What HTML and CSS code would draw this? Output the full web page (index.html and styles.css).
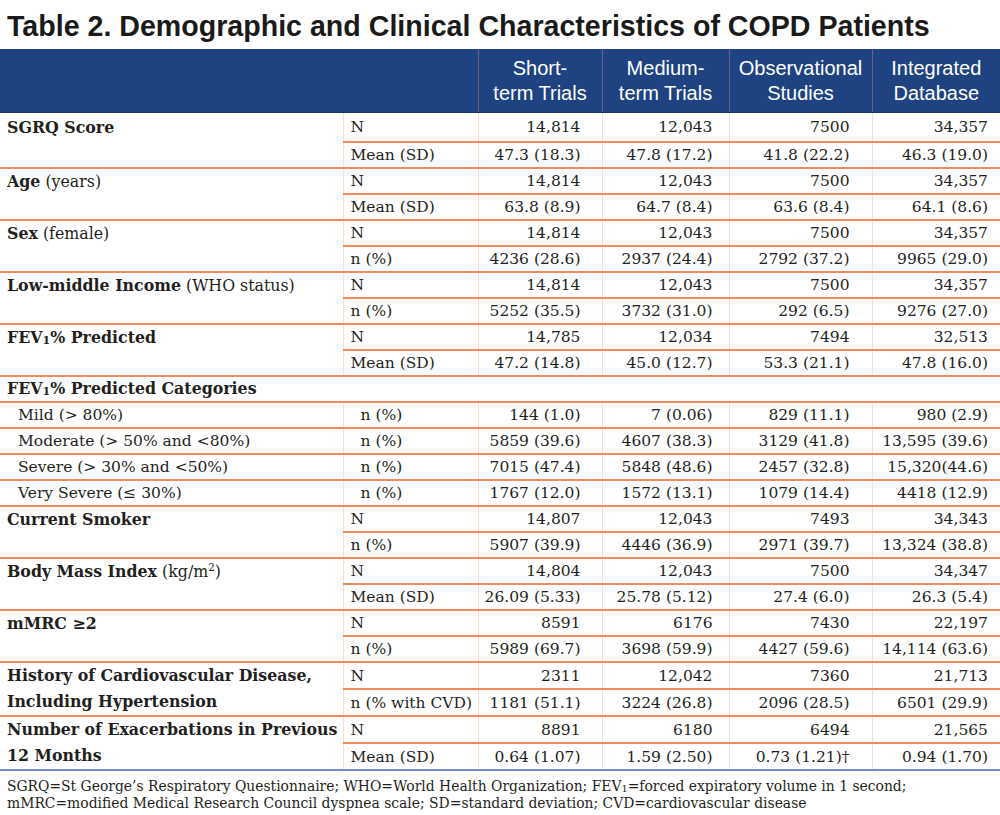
FILE: index.html
```html
<!DOCTYPE html>
<html lang="en">
<head>
<meta charset="utf-8">
<title>Table 2</title>
<link rel="stylesheet" href="styles.css">
</head>
<body>
<h1 class="title">Table 2. Demographic and Clinical Characteristics of COPD Patients</h1>
<table class="t">
  <colgroup>
    <col class="c-lab"><col class="c-st"><col class="c-1"><col class="c-2"><col class="c-3"><col class="c-4">
  </colgroup>
  <thead>
    <tr>
      <th colspan="2" class="h-blank"></th>
      <th>Short-<br>term Trials</th>
      <th>Medium-<br>term Trials</th>
      <th>Observational<br>Studies</th>
      <th>Integrated<br>Database</th>
    </tr>
  </thead>
  <tbody>
    <tr class="r-first">
      <td class="lab lab-first" rowspan="2"><b>SGRQ Score</b></td>
      <td class="st sub">N</td><td class="v v1 sub">14,814</td><td class="v v2 sub">12,043</td><td class="v v3 sub">7500</td><td class="v v4 sub">34,357</td>
    </tr>
    <tr>
      <td class="st">Mean (SD)</td><td class="v v1">47.3 (18.3)</td><td class="v v2">47.8 (17.2)</td><td class="v v3">41.8 (22.2)</td><td class="v v4">46.3 (19.0)</td>
    </tr>
    <tr>
      <td class="lab" rowspan="2"><b>Age</b> (years)</td>
      <td class="st sub">N</td><td class="v v1 sub">14,814</td><td class="v v2 sub">12,043</td><td class="v v3 sub">7500</td><td class="v v4 sub">34,357</td>
    </tr>
    <tr>
      <td class="st">Mean (SD)</td><td class="v v1">63.8 (8.9)</td><td class="v v2">64.7 (8.4)</td><td class="v v3">63.6 (8.4)</td><td class="v v4">64.1 (8.6)</td>
    </tr>
    <tr>
      <td class="lab" rowspan="2"><b>Sex</b> (female)</td>
      <td class="st sub">N</td><td class="v v1 sub">14,814</td><td class="v v2 sub">12,043</td><td class="v v3 sub">7500</td><td class="v v4 sub">34,357</td>
    </tr>
    <tr>
      <td class="st">n (%)</td><td class="v v1">4236 (28.6)</td><td class="v v2">2937 (24.4)</td><td class="v v3">2792 (37.2)</td><td class="v v4">9965 (29.0)</td>
    </tr>
    <tr>
      <td class="lab" rowspan="2"><b>Low-middle Income</b> (WHO status)</td>
      <td class="st sub">N</td><td class="v v1 sub">14,814</td><td class="v v2 sub">12,043</td><td class="v v3 sub">7500</td><td class="v v4 sub">34,357</td>
    </tr>
    <tr>
      <td class="st">n (%)</td><td class="v v1">5252 (35.5)</td><td class="v v2">3732 (31.0)</td><td class="v v3">292 (6.5)</td><td class="v v4">9276 (27.0)</td>
    </tr>
    <tr>
      <td class="lab" rowspan="2"><b>FEV<sub class="s1">1</sub>% Predicted</b></td>
      <td class="st sub">N</td><td class="v v1 sub">14,785</td><td class="v v2 sub">12,034</td><td class="v v3 sub">7494</td><td class="v v4 sub">32,513</td>
    </tr>
    <tr>
      <td class="st">Mean (SD)</td><td class="v v1">47.2 (14.8)</td><td class="v v2">45.0 (12.7)</td><td class="v v3">53.3 (21.1)</td><td class="v v4">47.8 (16.0)</td>
    </tr>
    <tr>
      <td class="lab head-row" colspan="6"><b>FEV<sub class="s1">1</sub>% Predicted Categories</b></td>
    </tr>
    <tr>
      <td class="lab cat">Mild (&gt; 80%)</td>
      <td class="st cat-st">n (%)</td><td class="v v1">144 (1.0)</td><td class="v v2">7 (0.06)</td><td class="v v3">829 (11.1)</td><td class="v v4">980 (2.9)</td>
    </tr>
    <tr>
      <td class="lab cat">Moderate (&gt; 50% and &lt;80%)</td>
      <td class="st cat-st">n (%)</td><td class="v v1">5859 (39.6)</td><td class="v v2">4607 (38.3)</td><td class="v v3">3129 (41.8)</td><td class="v v4">13,595 (39.6)</td>
    </tr>
    <tr>
      <td class="lab cat">Severe (&gt; 30% and &lt;50%)</td>
      <td class="st cat-st">n (%)</td><td class="v v1">7015 (47.4)</td><td class="v v2">5848 (48.6)</td><td class="v v3">2457 (32.8)</td><td class="v v4">15,320(44.6)</td>
    </tr>
    <tr>
      <td class="lab cat">Very Severe (≤ 30%)</td>
      <td class="st cat-st">n (%)</td><td class="v v1">1767 (12.0)</td><td class="v v2">1572 (13.1)</td><td class="v v3">1079 (14.4)</td><td class="v v4">4418 (12.9)</td>
    </tr>
    <tr>
      <td class="lab" rowspan="2"><b>Current Smoker</b></td>
      <td class="st sub">N</td><td class="v v1 sub">14,807</td><td class="v v2 sub">12,043</td><td class="v v3 sub">7493</td><td class="v v4 sub">34,343</td>
    </tr>
    <tr>
      <td class="st">n (%)</td><td class="v v1">5907 (39.9)</td><td class="v v2">4446 (36.9)</td><td class="v v3">2971 (39.7)</td><td class="v v4">13,324 (38.8)</td>
    </tr>
    <tr>
      <td class="lab" rowspan="2"><b>Body Mass Index</b> (kg/m<sup class="s2">2</sup>)</td>
      <td class="st sub">N</td><td class="v v1 sub">14,804</td><td class="v v2 sub">12,043</td><td class="v v3 sub">7500</td><td class="v v4 sub">34,347</td>
    </tr>
    <tr>
      <td class="st">Mean (SD)</td><td class="v v1">26.09 (5.33)</td><td class="v v2">25.78 (5.12)</td><td class="v v3">27.4 (6.0)</td><td class="v v4">26.3 (5.4)</td>
    </tr>
    <tr>
      <td class="lab" rowspan="2"><b>mMRC ≥2</b></td>
      <td class="st sub">N</td><td class="v v1 sub">8591</td><td class="v v2 sub">6176</td><td class="v v3 sub">7430</td><td class="v v4 sub">22,197</td>
    </tr>
    <tr>
      <td class="st">n (%)</td><td class="v v1">5989 (69.7)</td><td class="v v2">3698 (59.9)</td><td class="v v3">4427 (59.6)</td><td class="v v4">14,114 (63.6)</td>
    </tr>
    <tr>
      <td class="lab" rowspan="2"><b>History of Cardiovascular Disease,<br>Including Hypertension</b></td>
      <td class="st sub">N</td><td class="v v1 sub">2311</td><td class="v v2 sub">12,042</td><td class="v v3 sub">7360</td><td class="v v4 sub">21,713</td>
    </tr>
    <tr>
      <td class="st">n (% with CVD)</td><td class="v v1">1181 (51.1)</td><td class="v v2">3224 (26.8)</td><td class="v v3">2096 (28.5)</td><td class="v v4">6501 (29.9)</td>
    </tr>
    <tr>
      <td class="lab last" rowspan="2"><b>Number of Exacerbations in Previous<br>12 Months</b></td>
      <td class="st sub">N</td><td class="v v1 sub">8891</td><td class="v v2 sub">6180</td><td class="v v3 sub">6494</td><td class="v v4 sub">21,565</td>
    </tr>
    <tr class="r-last">
      <td class="st">Mean (SD)</td><td class="v v1">0.64 (1.07)</td><td class="v v2">1.59 (2.50)</td><td class="v v3">0.73 (1.21)†</td><td class="v v4">0.94 (1.70)</td>
    </tr>
  </tbody>
</table>
<p class="foot">SGRQ=St George’s Respiratory Questionnaire; WHO=World Health Organization; FEV<sub class="s1">1</sub>=forced expiratory volume in 1 second;<br>mMRC=modified Medical Research Council dyspnea scale; SD=standard deviation; CVD=cardiovascular disease</p>
</body>
</html>
```
FILE: styles.css
```css
html, body {
  margin: 0;
  padding: 0;
  background: #ffffff;
}
body {
  width: 1000px;
  color: #231f20;
}
.title {
  margin: 0;
  padding: 3px 0 0 7px;
  height: 46px;
  line-height: 46px;
  font-family: "Liberation Sans", Arial, sans-serif;
  font-weight: bold;
  font-size: 28.6px;
  color: #1a1a1a;
  white-space: nowrap;
}
.t {
  width: 1000px;
  border-collapse: collapse;
  table-layout: fixed;
  font-family: "DejaVu Serif", serif;
  font-size: 15.5px;
  color: #231f20;
}
.c-lab { width: 343px; }
.c-st { width: 135px; }
.c-1 { width: 124px; }
.c-2 { width: 127px; }
.c-3 { width: 143px; }
.c-4 { width: 128px; }

.t thead th {
  background: #1e4380;
  color: #ffffff;
  font-family: "Liberation Sans", Arial, sans-serif;
  font-weight: normal;
  font-size: 20px;
  line-height: 25px;
  height: 62px;
  padding: 1px 0 0;
  text-align: center;
  vertical-align: middle;
  border-left: 1px solid #6b5f86;
  border-bottom: 1px solid #163469;
}
.t thead th.h-blank {
  border-left: none;
}
.t td {
  height: 24px;
  padding: 0;
  line-height: 24px;
  vertical-align: middle;
  white-space: nowrap;
  border-bottom: 2px solid #f08a5d;
}
.t tr.r-first td {
  height: 28px;
}
.t td.lab {
  padding-left: 7px;
  font-size: 15.8px;
}
.t td[rowspan] {
  vertical-align: top;
  line-height: 26px;
  padding-top: 0;
}
.t td.lab-first {
  padding-top: 2px;
}
.t td.lab b {
  font-weight: bold;
}
.t td.head-row {
  border-left: none;
}
.t td.cat {
  padding-left: 18px;
  font-size: 15.5px;
}
.t td.st {
  padding-left: 7px;
  border-left: 1px solid #fbdccb;
}
.t td.cat-st {
  padding-left: 17px;
}
.t td.v {
  text-align: right;
  border-left: 1px solid #fbdccb;
}
.t td.v1 { padding-right: 21px; }
.t td.v2 { padding-right: 16px; }
.t td.v3 { padding-right: 22px; }
.t td.v4 { padding-right: 12px; }
.t tr.r-last td,
.t td.lab.last {
  border-bottom: 2px solid #7390ba;
}
.s1 {
  font-size: 0.7em;
  vertical-align: -0.1em;
  line-height: 0;
}
.s2 {
  font-size: 0.65em;
  vertical-align: 0.55em;
  line-height: 0;
}
.foot {
  margin: 0;
  padding: 7px 0 0 7px;
  font-family: "DejaVu Serif", serif;
  font-size: 13.9px;
  line-height: 17px;
  color: #231f20;
  white-space: nowrap;
}
```
